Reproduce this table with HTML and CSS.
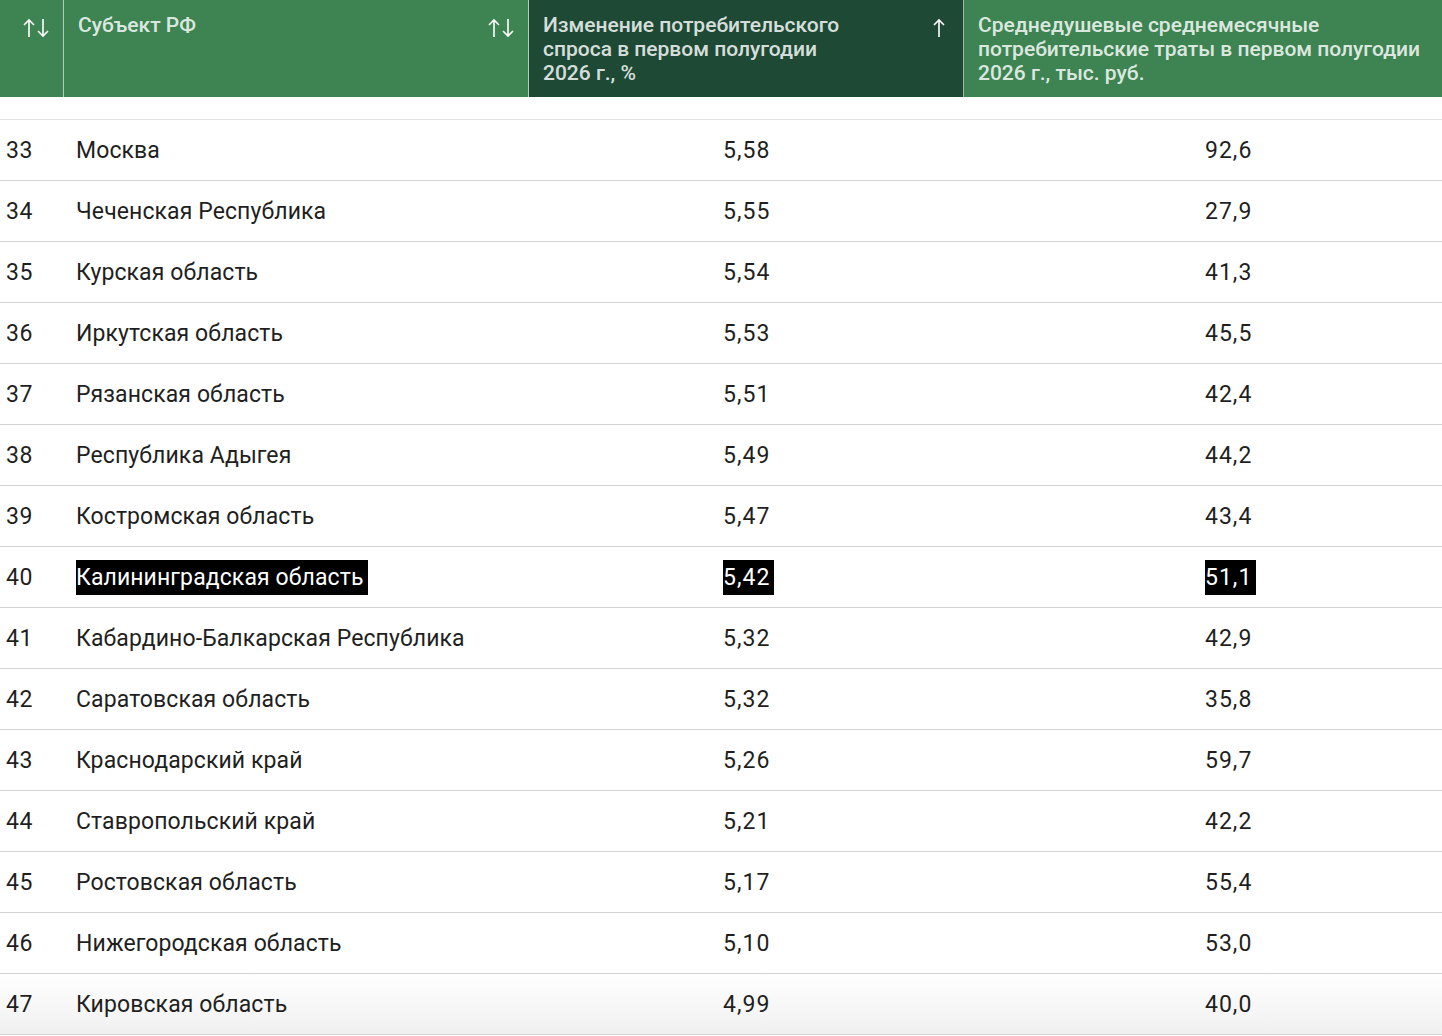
FILE: index.html
```html
<!DOCTYPE html>
<html lang="ru">
<head>
<meta charset="utf-8">
<link rel="stylesheet" href="styles.css">
</head>
<body>
<div class="table">
  <div class="head">
    <div class="th th-num">
      <svg class="sort" width="26" height="20" viewBox="0 0 26 20"><path d="M6 2v17M1 7l5-5 5 5M20 18V1M15 13l5 5 5-5" fill="none" stroke="#fff" stroke-width="1.6"/></svg>
    </div>
    <div class="th th-name">
      <span class="th-text">Субъект РФ</span>
      <svg class="sort" width="26" height="20" viewBox="0 0 26 20"><path d="M6 2v17M1 7l5-5 5 5M20 18V1M15 13l5 5 5-5" fill="none" stroke="#fff" stroke-width="1.6"/></svg>
    </div>
    <div class="th th-active">
      <span class="th-text">Изменение потребительского спроса в первом полугодии 2026 г., %</span>
      <svg class="sort" width="12" height="20" viewBox="0 0 12 20"><path d="M6 2v17M1 7l5-5 5 5" fill="none" stroke="#fff" stroke-width="1.6"/></svg>
    </div>
    <div class="th th-last">
      <span class="th-text">Среднедушевые среднемесячные потребительские траты в первом полугодии 2026 г., тыс. руб.</span>
    </div>
  </div>
  <div class="gap"></div>
  <div class="body">
    <div class="row"><span class="c-num">33</span><span class="c-name">Москва</span><span class="c-v1">5,58</span><span class="c-v2">92,6</span></div>
    <div class="row"><span class="c-num">34</span><span class="c-name">Чеченская Республика</span><span class="c-v1">5,55</span><span class="c-v2">27,9</span></div>
    <div class="row"><span class="c-num">35</span><span class="c-name">Курская область</span><span class="c-v1">5,54</span><span class="c-v2">41,3</span></div>
    <div class="row"><span class="c-num">36</span><span class="c-name">Иркутская область</span><span class="c-v1">5,53</span><span class="c-v2">45,5</span></div>
    <div class="row"><span class="c-num">37</span><span class="c-name">Рязанская область</span><span class="c-v1">5,51</span><span class="c-v2">42,4</span></div>
    <div class="row"><span class="c-num">38</span><span class="c-name">Республика Адыгея</span><span class="c-v1">5,49</span><span class="c-v2">44,2</span></div>
    <div class="row"><span class="c-num">39</span><span class="c-name">Костромская область</span><span class="c-v1">5,47</span><span class="c-v2">43,4</span></div>
    <div class="row"><span class="c-num">40</span><span class="c-name"><mark class="hl">Калининградская область</mark></span><span class="c-v1"><mark class="hl">5,42</mark></span><span class="c-v2"><mark class="hl">51,1</mark></span></div>
    <div class="row"><span class="c-num">41</span><span class="c-name">Кабардино-Балкарская Республика</span><span class="c-v1">5,32</span><span class="c-v2">42,9</span></div>
    <div class="row"><span class="c-num">42</span><span class="c-name">Саратовская область</span><span class="c-v1">5,32</span><span class="c-v2">35,8</span></div>
    <div class="row"><span class="c-num">43</span><span class="c-name">Краснодарский край</span><span class="c-v1">5,26</span><span class="c-v2">59,7</span></div>
    <div class="row"><span class="c-num">44</span><span class="c-name">Ставропольский край</span><span class="c-v1">5,21</span><span class="c-v2">42,2</span></div>
    <div class="row"><span class="c-num">45</span><span class="c-name">Ростовская область</span><span class="c-v1">5,17</span><span class="c-v2">55,4</span></div>
    <div class="row"><span class="c-num">46</span><span class="c-name">Нижегородская область</span><span class="c-v1">5,10</span><span class="c-v2">53,0</span></div>
    <div class="row row-fade"><span class="c-num">47</span><span class="c-name">Кировская область</span><span class="c-v1">4,99</span><span class="c-v2">40,0</span></div>
  </div>
</div>
</body>
</html>
```

FILE: styles.css
```css
html, body {
  margin: 0;
  padding: 0;
  background: #fff;
  overflow: hidden;
}
body {
  font-family: Roboto, "Noto Sans", sans-serif;
  color: #1f1f1f;
}
.table {
  width: 1442px;
}
.head {
  display: grid;
  grid-template-columns: 64px 465px 435px 1fr;
  height: 97px;
  background: #3d8452;
}
.th {
  display: flex;
  align-items: flex-start;
  justify-content: space-between;
  padding: 13px 14px 0 14px;
  box-sizing: border-box;
  border-right: 1px solid rgba(255, 255, 255, 0.6);
}
.th-last {
  border-right: none;
}
.th-num {
  justify-content: flex-end;
  padding-right: 14px;
}
.th-active {
  background: #1e4a35;
  padding-right: 18px;
}
.th-text {
  font-size: 21px;
  font-weight: 500;
  line-height: 24px;
  color: rgba(255, 255, 255, 0.84);
}
.th-active .th-text {
  max-width: 315px;
}
.th-last .th-text {
  max-width: 455px;
}
.sort {
  margin-top: 5px;
  flex: none;
}
.gap {
  height: 22px;
  border-bottom: 1px solid #e3e3e3;
}
.row {
  display: grid;
  grid-template-columns: 76px 452px 435px 1fr;
  align-items: center;
  height: 61px;
  box-sizing: border-box;
  border-bottom: 1px solid #d4d4d4;
  font-size: 23px;
}
.c-num {
  padding-left: 6px;
  letter-spacing: 0.5px;
}
.c-name {
  letter-spacing: 0.1px;
}
.c-v1 {
  padding-left: 195px;
  letter-spacing: 1px;
}
.c-v2 {
  padding-left: 242px;
  letter-spacing: 1px;
}
.hl {
  background: #000;
  color: #fff;
  padding: 4px 5px 4px 0;
}
.c-v1 .hl, .c-v2 .hl {
  padding-right: 4px;
}
.row-fade {
  background: linear-gradient(#fff, #f0f0f0);
}
```
